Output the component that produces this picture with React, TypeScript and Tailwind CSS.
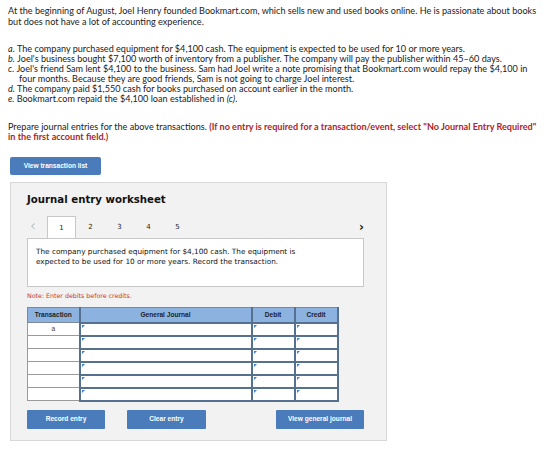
import React from 'react'

const intro = [
  'At the beginning of August, Joel Henry founded Bookmart.com, which sells new and used books online. He is passionate about books',
  'but does not have a lot of accounting experience.',
]

const items: { label: string; lines: string[]; ref?: boolean }[] = [
  { label: 'a.', lines: ['The company purchased equipment for $4,100 cash. The equipment is expected to be used for 10 or more years.'] },
  { label: 'b.', lines: ["Joel's business bought $7,100 worth of inventory from a publisher. The company will pay the publisher within 45–60 days."] },
  {
    label: 'c.',
    lines: [
      "Joel's friend Sam lent $4,100 to the business. Sam had Joel write a note promising that Bookmart.com would repay the $4,100 in",
      'four months. Because they are good friends, Sam is not going to charge Joel interest.',
    ],
  },
  { label: 'd.', lines: ['The company paid $1,550 cash for books purchased on account earlier in the month.'] },
  { label: 'e.', lines: ['Bookmart.com repaid the $4,100 loan established in '], ref: true },
]

const rows = ['a', '', '', '', '', '']

// little blue flag in the corner of each dropdown / amount field
const Flag = () => (
  <span className="absolute left-[1px] top-[1px] h-0 w-0 border-t-[3px] border-r-[3px] border-t-[#3d7fd6] border-r-transparent" />
)

const InputCell = () => (
  <td className="relative border-2 border-[#56708f] bg-white p-0">
    <Flag />
  </td>
)

export default function App() {
  return (
    <div className="h-[452px] w-[560px] bg-white font-['Lato',sans-serif] text-[#222]">
      <div className="px-[8px] pt-[6px] text-[9.1px] leading-[10.5px]">
        {intro.map((l) => (
          <div key={l} className="whitespace-nowrap">{l}</div>
        ))}
      </div>

      <div className="mt-[17px] px-[8px] text-[9.1px] leading-[9.9px]">
        {items.map((it) => (
          <div key={it.label}>
            {it.lines.map((l, i) => (
              <div key={i} className={`whitespace-nowrap ${i > 0 ? 'pl-[11px]' : ''}`}>
                {i === 0 && <i>{it.label} </i>}
                {l}
                {it.ref && <i>(c)</i>}
                {it.ref && '.'}
              </div>
            ))}
          </div>
        ))}
      </div>

      <div className="mt-[19px] px-[8px] text-[9.1px] leading-[10px]">
        <div className="whitespace-nowrap">
          Prepare journal entries for the above transactions.{' '}
          <span className="font-bold text-[#b0232a]">
            (If no entry is required for a transaction/event, select "No Journal Entry Required"
          </span>
        </div>
        <div className="font-bold text-[#b0232a]">in the first account field.)</div>
      </div>

      <div className="ml-[10px] mt-[15px] flex h-[18px] w-[91px] items-center justify-center rounded-[2px] bg-[#4a7bbb] font-['Liberation_Sans',sans-serif] text-[6.6px] font-bold text-white">
        View transaction list
      </div>

      <div className="ml-[10px] mt-[7px] h-[259px] w-[377px] border border-[#d8d8d8] bg-[#f2f2f2] pl-[16px] pr-[22px] pt-[10px]">
        <div className="font-['DejaVu_Sans',sans-serif] text-[10.2px] font-bold leading-[14px] text-[#111]">
          Journal entry worksheet
        </div>

        <div className="mt-[9px] flex h-[22px] items-end font-['DejaVu_Sans',sans-serif] text-[7px] text-[#222]">
          <div className="flex h-full w-[20px] items-center pb-[2px] pl-[3px] text-[15px] font-light text-[#aaa]">‹</div>
          <div className="flex h-[22px] w-[29px] items-center justify-center border border-b-0 border-[#c8c8c8] bg-white">1</div>
          {['2', '3', '4', '5'].map((n) => (
            <div key={n} className="flex h-full w-[29px] items-center justify-center">
              {n}
            </div>
          ))}
          <div className="ml-auto flex h-full items-center text-[12px] font-bold text-[#222]">›</div>
        </div>

        <div className="h-[49px] w-[337px] border border-[#c8c8c8] bg-white px-[8px] pt-[8px] font-['DejaVu_Sans',sans-serif] text-[7.3px] leading-[10px] text-[#111]">
          The company purchased equipment for $4,100 cash. The equipment is
          <br />
          expected to be used for 10 or more years. Record the transaction.
        </div>

        <div className="mt-[5px] font-['DejaVu_Sans',sans-serif] text-[6.3px] leading-[8px] text-[#c0392b]">
          Note: Enter debits before credits.
        </div>

        <table className="mt-[7px] w-[310px] table-fixed border-collapse font-['Liberation_Sans',sans-serif] text-[6.6px]">
          <colgroup>
            <col className="w-[52px]" />
            <col className="w-[172px]" />
            <col className="w-[43px]" />
            <col className="w-[43px]" />
          </colgroup>
          <thead>
            <tr className="h-[15px] bg-[#8cb2e0] font-bold text-[#222]">
              <th className="border border-[#7d8898] border-r-2 border-r-[#56708f]">Transaction</th>
              <th className="border-2 border-[#56708f] border-t border-t-[#7d8898]">General Journal</th>
              <th className="border-2 border-[#56708f] border-t border-t-[#7d8898]">Debit</th>
              <th className="border-2 border-[#56708f] border-t border-t-[#7d8898]">Credit</th>
            </tr>
          </thead>
          <tbody>
            {rows.map((r, i) => (
              <tr key={i} className="h-[13px]">
                <td className="border border-[#9a9a9a] bg-white p-0 text-center text-[6.6px] leading-[10px] text-[#444]">
                  {r}
                </td>
                <InputCell />
                <InputCell />
                <InputCell />
              </tr>
            ))}
          </tbody>
        </table>

        <div className="mt-[8px] flex font-['Liberation_Sans',sans-serif] text-[6.6px] font-bold text-white">
          <div className="flex h-[19px] w-[78px] items-center justify-center rounded-[1px] bg-[#4a7bbb]">Record entry</div>
          <div className="ml-[22px] flex h-[19px] w-[79px] items-center justify-center rounded-[1px] bg-[#4a7bbb]">Clear entry</div>
          <div className="ml-auto flex h-[19px] w-[88px] items-center justify-center rounded-[1px] bg-[#4a7bbb]">View general journal</div>
        </div>
      </div>
    </div>
  )
}
